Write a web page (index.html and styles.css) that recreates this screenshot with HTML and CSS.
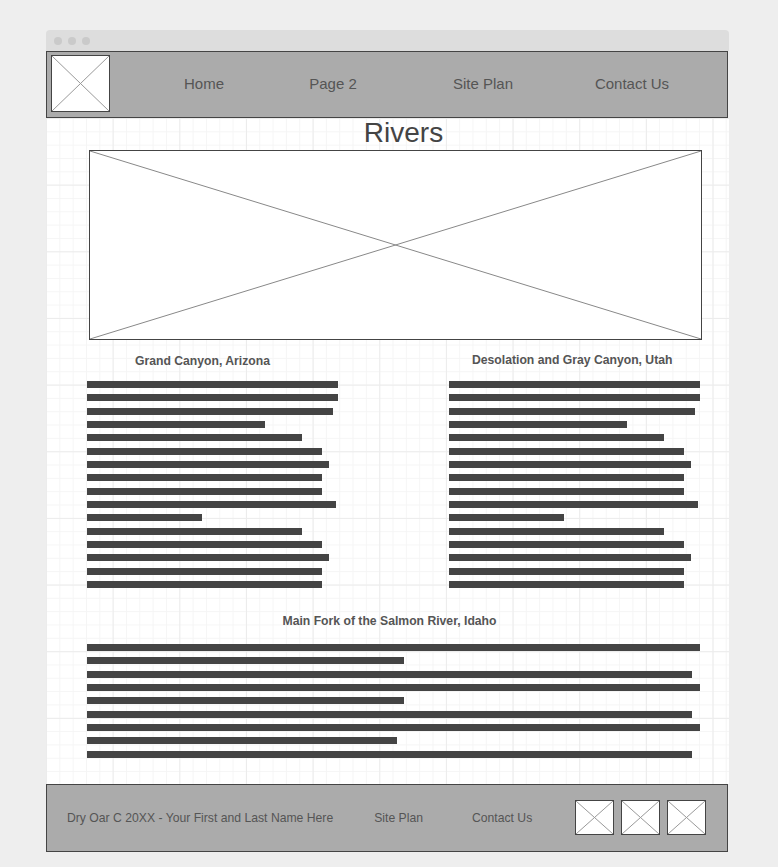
FILE: index.html
```html
<!DOCTYPE html>
<html lang="en">
<head>
  <meta charset="UTF-8" />
  <meta name="viewport" content="width=device-width, initial-scale=1.0"/>
  <title>Rivers</title>
  <link rel="stylesheet" href="styles.css">
</head>
<body>
  <div class="window">
    <div class="titlebar">
      <span class="dot"></span>
      <span class="dot"></span>
      <span class="dot"></span>
    </div>

    <header class="header">
      <div class="placeholder logo">
        <svg viewBox="0 0 100 100" preserveAspectRatio="none"><line x1="0" y1="0" x2="100" y2="100"/><line x1="100" y1="0" x2="0" y2="100"/></svg>
      </div>
      <nav class="nav">
        <a>Home</a>
        <a>Page 2</a>
        <a>Site Plan</a>
        <a>Contact Us</a>
      </nav>
    </header>

    <main class="content">
      <h1 class="title">Rivers</h1>
      <div class="placeholder hero">
        <svg viewBox="0 0 100 100" preserveAspectRatio="none"><line x1="0" y1="0" x2="100" y2="100"/><line x1="100" y1="0" x2="0" y2="100"/></svg>
      </div>

      <div class="columns">
        <section class="col">
          <h2 class="heading left">Grand Canyon, Arizona</h2>
          <div class="lines">
            <div class="bar" style="width:251px"></div>
            <div class="bar" style="width:251px"></div>
            <div class="bar" style="width:246px"></div>
            <div class="bar" style="width:178px"></div>
            <div class="bar" style="width:215px"></div>
            <div class="bar" style="width:235px"></div>
            <div class="bar" style="width:242px"></div>
            <div class="bar" style="width:235px"></div>
            <div class="bar" style="width:235px"></div>
            <div class="bar" style="width:249px"></div>
            <div class="bar" style="width:115px"></div>
            <div class="bar" style="width:215px"></div>
            <div class="bar" style="width:235px"></div>
            <div class="bar" style="width:242px"></div>
            <div class="bar" style="width:235px"></div>
            <div class="bar" style="width:235px"></div>
          </div>
        </section>
        <section class="col">
          <h2 class="heading right">Desolation and Gray Canyon, Utah</h2>
          <div class="lines">
            <div class="bar" style="width:251px"></div>
            <div class="bar" style="width:251px"></div>
            <div class="bar" style="width:246px"></div>
            <div class="bar" style="width:178px"></div>
            <div class="bar" style="width:215px"></div>
            <div class="bar" style="width:235px"></div>
            <div class="bar" style="width:242px"></div>
            <div class="bar" style="width:235px"></div>
            <div class="bar" style="width:235px"></div>
            <div class="bar" style="width:249px"></div>
            <div class="bar" style="width:115px"></div>
            <div class="bar" style="width:215px"></div>
            <div class="bar" style="width:235px"></div>
            <div class="bar" style="width:242px"></div>
            <div class="bar" style="width:235px"></div>
            <div class="bar" style="width:235px"></div>
          </div>
        </section>
      </div>

      <section class="wide">
        <h2 class="heading center">Main Fork of the Salmon River, Idaho</h2>
        <div class="lines">
          <div class="bar" style="width:613px"></div>
          <div class="bar" style="width:317px"></div>
          <div class="bar" style="width:605px"></div>
          <div class="bar" style="width:613px"></div>
          <div class="bar" style="width:317px"></div>
          <div class="bar" style="width:605px"></div>
          <div class="bar" style="width:613px"></div>
          <div class="bar" style="width:310px"></div>
          <div class="bar" style="width:605px"></div>
        </div>
      </section>
    </main>

    <footer class="footer">
      <span class="copy">Dry Oar C 20XX - Your First and Last Name Here</span>
      <a class="foot-link plan">Site Plan</a>
      <a class="foot-link contact">Contact Us</a>
      <div class="socials">
        <div class="placeholder social">
          <svg viewBox="0 0 100 100" preserveAspectRatio="none"><line x1="0" y1="0" x2="100" y2="100"/><line x1="100" y1="0" x2="0" y2="100"/></svg>
        </div>
        <div class="placeholder social">
          <svg viewBox="0 0 100 100" preserveAspectRatio="none"><line x1="0" y1="0" x2="100" y2="100"/><line x1="100" y1="0" x2="0" y2="100"/></svg>
        </div>
        <div class="placeholder social">
          <svg viewBox="0 0 100 100" preserveAspectRatio="none"><line x1="0" y1="0" x2="100" y2="100"/><line x1="100" y1="0" x2="0" y2="100"/></svg>
        </div>
      </div>
    </footer>
  </div>
</body>
</html>
```

FILE: styles.css
```css
body {
  margin: 0;
  background: #eeeeee;
  font-family: "Liberation Sans", Arial, sans-serif;
}
.window {
  width: 683px;
  margin: 30px 0 0 46px;
}
.titlebar {
  height: 21px;
  background: #dddddd;
  border-radius: 4px 4px 0 0;
  display: flex;
  align-items: center;
  gap: 6px;
  padding-left: 8px;
}
.dot {
  width: 8px;
  height: 8px;
  border-radius: 50%;
  background: #cacaca;
}
.placeholder {
  box-sizing: border-box;
  background: white;
  border: 1px solid #444;
}
.placeholder svg {
  display: block;
  width: 100%;
  height: 100%;
}
.placeholder line {
  stroke: #999;
  stroke-width: 1;
  vector-effect: non-scaling-stroke;
}
.header {
  box-sizing: border-box;
  width: 682px;
  height: 67px;
  background: #ababab;
  border: 1px solid #444;
  display: flex;
  align-items: flex-start;
}
.logo {
  width: 59px;
  height: 57px;
  margin: 3px 0 0 4px;
}
.nav {
  display: grid;
  grid-template-columns: 128px 130px 170px 128px;
  margin-left: 30px;
  padding-bottom: 2px;
  align-self: center;
}
.nav a {
  text-align: center;
  font-size: 15px;
  color: #555;
}
.content {
  height: 666px;
  background-color: white;
  background-image:
    linear-gradient(#ececec 1px, transparent 1px),
    linear-gradient(90deg, #ececec 1px, transparent 1px),
    linear-gradient(#f5f5f5 1px, transparent 1px),
    linear-gradient(90deg, #f5f5f5 1px, transparent 1px);
  background-size: 66.667px 66.667px, 66.667px 66.667px, 13.333px 13.333px, 13.333px 13.333px;
  overflow: hidden;
}
.title {
  margin: 0 0 2px;
  padding-left: 32px;
  text-align: center;
  font-size: 28px;
  line-height: 30px;
  font-weight: normal;
  color: #444;
}
.hero {
  width: 613px;
  height: 190px;
  margin-left: 43px;
}
.hero line {
  stroke: #888;
}
.columns {
  display: flex;
  gap: 111px;
  margin: 14px 0 0 41px;
}
.col {
  width: 251px;
}
.heading {
  margin: 0 0 13px;
  font-size: 12.2px;
  line-height: 14px;
  font-weight: bold;
  color: #555;
  white-space: nowrap;
}
.heading.left {
  padding-left: 48px;
}
.heading.right {
  padding-left: 23px;
  margin-top: -1px;
  margin-bottom: 14px;
}
.heading.center {
  text-align: center;
  padding-right: 8px;
  margin-bottom: 16px;
}
.lines {
  display: flex;
  flex-direction: column;
  gap: 6.333px;
}
.bar {
  height: 7px;
  background: #444;
}
.wide {
  width: 613px;
  margin: 26px 0 0 41px;
}
.footer {
  box-sizing: border-box;
  width: 682px;
  height: 68px;
  background: #ababab;
  border: 1px solid #444;
  display: flex;
  align-items: center;
  padding-left: 20px;
  font-size: 12.2px;
  color: #555;
}
.copy {
  white-space: nowrap;
}
.foot-link.plan {
  margin-left: 41px;
}
.foot-link.contact {
  margin-left: 49px;
}
.socials {
  display: flex;
  gap: 7px;
  margin: 0 0 2px 43px;
}
.social {
  width: 39px;
  height: 35px;
}
```
